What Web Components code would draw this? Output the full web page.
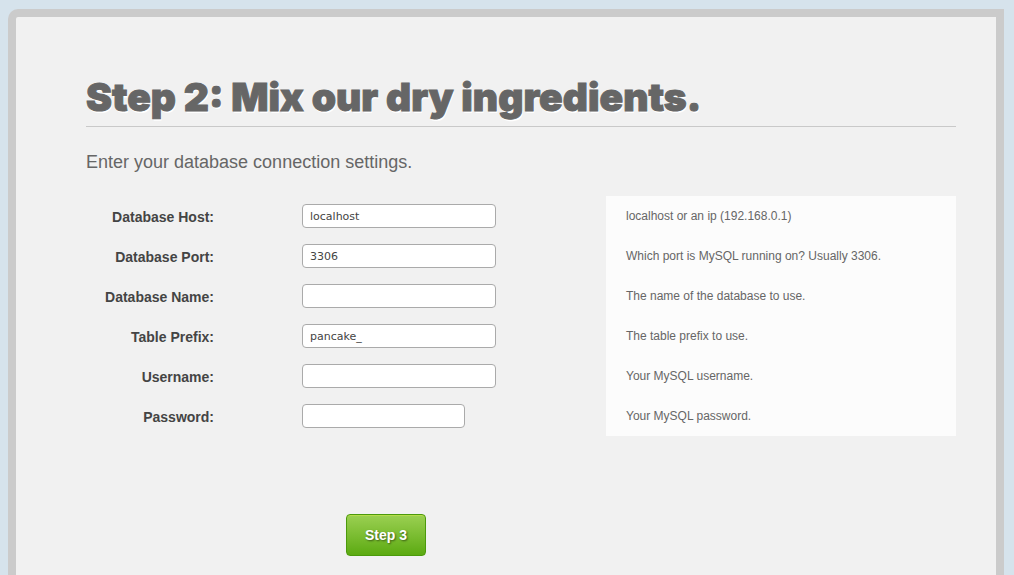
<!DOCTYPE html>
<html lang="en">
<head>
  <meta charset="utf-8">
  <meta name="viewport" content="width=device-width, initial-scale=1">
  <title>Step 2: Mix our dry ingredients.</title>
  <style>
    body {
      margin: 0;
      background: #d6e3ec;
      color: #666;
      font-family: "Helvetica Neue", "Liberation Sans", Arial, sans-serif;
    }
  </style>
</head>
<body>
  <install-panel>
    <span slot="title">Step 2: Mix our dry ingredients.</span>
    <span slot="intro">Enter your database connection settings.</span>

    <setting-field label="Database Host:" name="hostname" value="localhost">localhost or an ip (192.168.0.1)</setting-field>
    <setting-field label="Database Port:" name="port" value="3306">Which port is MySQL running on? Usually 3306.</setting-field>
    <setting-field label="Database Name:" name="database">The name of the database to use.</setting-field>
    <setting-field label="Table Prefix:" name="dbprefix" value="pancake_">The table prefix to use.</setting-field>
    <setting-field label="Username:" name="username">Your MySQL username.</setting-field>
    <setting-field label="Password:" name="password" type="password">Your MySQL password.</setting-field>

    <step-button slot="actions">Step 3</step-button>
  </install-panel>

  <script>
    class InstallPanel extends HTMLElement {
      constructor() {
        super();

        const template = document.createElement('template');

        template.innerHTML = `
            <style>
                :host {
                  display: block;
                  box-sizing: border-box;
                  min-height: calc(100vh - 9px);
                  margin: 9px 10px 0 8px;
                  padding: 60px 40px 16px 70px;
                  border: 8px solid #cbcbcb;
                  border-bottom: 0;
                  border-top-left-radius: 10px;
                  background: #f1f1f1;
                }

                h1 {
                  margin: 0;
                  padding-bottom: 9px;
                  border-bottom: 1px solid #c9c9c9;
                  font: 900 39px/40px Inter, sans-serif;
                  -webkit-text-stroke: 1px #666;
                  text-shadow: 1px 2px 0 #fff;
                }

                .intro {
                  margin: 25px 0 23px;
                  font-size: 18px;
                  line-height: 21px;
                }

                .actions {
                  display: flex;
                  padding: 78px 0 0 260px;
                }
            </style>

            <h1><slot name="title"></slot></h1>
            <p class="intro"><slot name="intro"></slot></p>
            <form>
                <slot></slot>
                <div class="actions"><slot name="actions"></slot></div>
            </form>`;

        this.attachShadow({ mode: 'open' });
        this.shadowRoot.appendChild(template.content.cloneNode(true));
      }
    }

    /**
     * One row of the form: label, input and a hint (the slotted text)
     */
    class SettingField extends HTMLElement {
      constructor() {
        super();

        const template = document.createElement('template');

        template.innerHTML = `
            <style>
                :host {
                  display: grid;
                  grid-template-columns: 128px minmax(0, 1fr) minmax(0, 350px);
                  grid-template-rows: 40px;
                }

                label {
                  color: #444;
                  font-size: 14px;
                  font-weight: bold;
                  line-height: 42px;
                  text-align: right;
                }

                .control {
                  display: flex;
                  align-items: center;
                  padding-left: 88px;
                }

                input {
                  box-sizing: border-box;
                  width: 194px;
                  height: 24px;
                  padding: 0 7px;
                  border: 1px solid #aaa;
                  border-radius: 4px;
                  background: #fff;
                  color: #444;
                  font: 11px "Lucida Grande", "DejaVu Sans", sans-serif;
                }

                input[type="password"] {
                  width: 163px;
                }

                .hint {
                  padding-left: 20px;
                  background: #fcfcfc;
                  font-size: 12px;
                  line-height: 40px;
                }
            </style>

            <label for="field"></label>
            <div class="control"><input id="field" aria-describedby="hint"></div>
            <div class="hint" id="hint"><slot></slot></div>`;

        this.attachShadow({ mode: 'open' });
        this.shadowRoot.appendChild(template.content.cloneNode(true));
      }

      connectedCallback() {
        const input = this.shadowRoot.querySelector('input');
        this.shadowRoot.querySelector('label').textContent = this.getAttribute('label');
        input.type = this.getAttribute('type') || 'text';
        input.name = this.getAttribute('name');
        input.value = this.getAttribute('value') || '';
      }
    }

    class StepButton extends HTMLElement {
      constructor() {
        super();

        const template = document.createElement('template');

        template.innerHTML = `
            <style>
                :host {
                  display: block;
                }

                button {
                  height: 42px;
                  padding: 0 18px;
                  border: 1px solid #4c9a0c;
                  border-radius: 4px;
                  background: linear-gradient(#9bd052, #5caa12);
                  box-shadow: inset 0 1px 0 #b6dc4a;
                  color: #fff;
                  font: bold 14px "Helvetica Neue", "Liberation Sans", Arial, sans-serif;
                  text-shadow: 1px 1px 2px rgba(0, 0, 0, 0.5);
                  cursor: pointer;
                }
            </style>

            <button type="button"><slot></slot></button>`;

        this.attachShadow({ mode: 'open' });
        this.shadowRoot.appendChild(template.content.cloneNode(true));
      }
    }

    customElements.define('install-panel', InstallPanel);
    customElements.define('setting-field', SettingField);
    customElements.define('step-button', StepButton);
  </script>
</body>
</html>
